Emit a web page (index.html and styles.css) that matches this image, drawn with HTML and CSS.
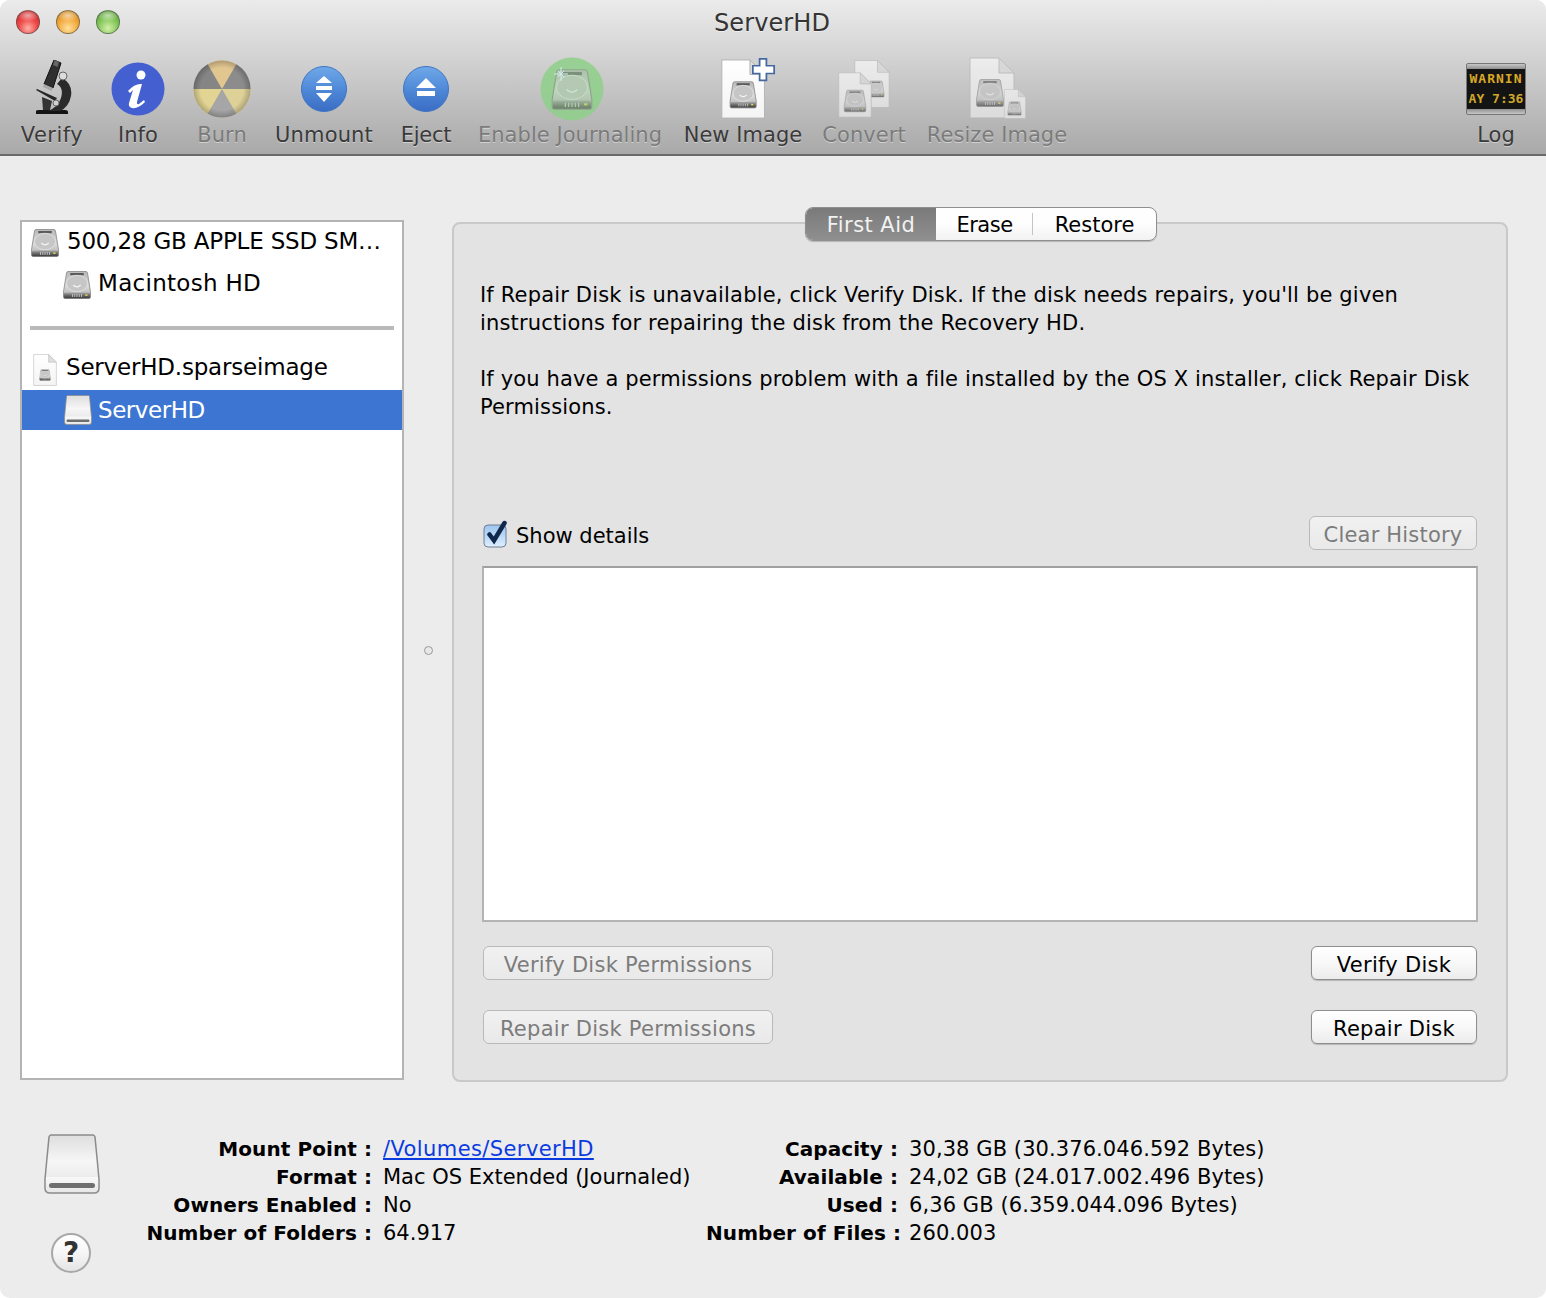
FILE: index.html
```html
<!DOCTYPE html>
<html lang="en">
<head>
<meta charset="utf-8">
<title>ServerHD</title>
<link rel="stylesheet" href="styles.css">
</head>
<body>
<svg class="sprite" width="0" height="0" aria-hidden="true">
  <defs>
    <linearGradient id="hdBody" x1="0" y1="0" x2="0" y2="1"><stop offset="0" stop-color="#b9b9b9"/><stop offset="0.55" stop-color="#d8d8d8"/><stop offset="1" stop-color="#ababab"/></linearGradient>
    <linearGradient id="hdFoot" x1="0" y1="0" x2="0" y2="1"><stop offset="0" stop-color="#a8a8a8"/><stop offset="0.5" stop-color="#6c6c6c"/><stop offset="1" stop-color="#3d3d3d"/></linearGradient>
    <linearGradient id="remBody" x1="0" y1="0" x2="0" y2="1"><stop offset="0" stop-color="#dedede"/><stop offset="0.45" stop-color="#f6f6f6"/><stop offset="0.72" stop-color="#ececec"/><stop offset="0.73" stop-color="#f8f8f8"/><stop offset="1" stop-color="#e6e6e6"/></linearGradient>
    <linearGradient id="blueBtn" x1="0" y1="0" x2="0" y2="1"><stop offset="0" stop-color="#6fa9e8"/><stop offset="0.55" stop-color="#4d86d6"/><stop offset="1" stop-color="#3a6dc4"/></linearGradient>
    <linearGradient id="docFill" x1="0" y1="0" x2="0" y2="1"><stop offset="0" stop-color="#ffffff"/><stop offset="1" stop-color="#f4f4f4"/></linearGradient>
    <linearGradient id="checkFill" x1="0" y1="0" x2="0" y2="1"><stop offset="0" stop-color="#9fc6ee"/><stop offset="0.5" stop-color="#b9d8f7"/><stop offset="1" stop-color="#e0f0ff"/></linearGradient>
    <radialGradient id="burnShade" cx="0.5" cy="0.5" r="0.5"><stop offset="0.75" stop-color="#000" stop-opacity="0"/><stop offset="1" stop-color="#000" stop-opacity="0.22"/></radialGradient>
    <symbol id="hd" viewBox="0 0 40 40">
      <path d="M8 2H32Q33.500 2 34 4L38 29V36Q38 38 36 38H4Q2 38 2 36V29L6 4Q6.500 2 8 2Z" fill="url(#hdBody)" stroke="#808080" stroke-width="1"/>
      <rect x="11" y="4" width="18" height="3" fill="#5a5a5a"/>
      <ellipse cx="20" cy="18" rx="14" ry="11" fill="#c6c6c6" stroke="#e6e6e6" stroke-width="1"/>
      <path d="M15 20Q20 25 25 20" fill="none" stroke="#f4f4f4" stroke-width="1.500"/>
      <rect x="2.500" y="30" width="35" height="7.500" rx="1.500" fill="url(#hdFoot)"/>
      <path d="M14 32V36M17 32V36M20 32V36M23 32V36M26 32V36" stroke="#d4d4d4" stroke-width="1"/>
      <rect x="31" y="32.500" width="3" height="2" fill="#e8d34a"/>
    </symbol>
    <symbol id="rem" viewBox="0 0 56 60">
      <path d="M7 1H49Q50.500 1 51 3L55 45V54Q55 59 50 59H6Q1 59 1 54V45L5 3Q5.500 1 7 1Z" fill="url(#remBody)" stroke="#8b8b8b" stroke-width="1.500"/>
      <rect x="5" y="49" width="46" height="5" rx="2.500" fill="#6e6e6e"/>
    </symbol>
    <symbol id="page" viewBox="0 0 46 62">
      <path d="M1 1H30L45 16V61H1Z" fill="url(#docFill)" stroke="#b4b4b4" stroke-width="1"/>
      <path d="M30 1V16H45Z" fill="#dedede" stroke="#b4b4b4" stroke-width="1"/>
    </symbol>
    <symbol id="micro" viewBox="0 0 36 56">
      <path d="M0 51Q0 50 3 50H29Q32 50 32 52V54H0Z" fill="#141414"/>
      <path d="M26 18Q37 24 35 36Q33 47 24 51H12Q22 47 25 38Q28 28 21 24Z" fill="#2a2a2a"/>
      <path d="M18 0L25 3L17 28L8 24Z" fill="#2f2f2f" stroke="#111111" stroke-width="1"/>
      <path d="M18.500 0L23 2L21.500 7L17 5Z" fill="#666666"/>
      <path d="M8 24L17 28L15.500 31L7 27Z" fill="#a8a8a8"/>
      <path d="M0 30L1 29L21 38L19 41Z" fill="#262626"/>
      <path d="M6 37L16 41L14 50H7Z" fill="#333333"/>
      <circle cx="27" cy="16" r="4" fill="#dcdcdc" stroke="#666666" stroke-width="1"/>
      <circle cx="20" cy="43" r="3" fill="#d0d0d0" stroke="#666666" stroke-width="1"/>
    </symbol>
  </defs>
</svg>

<div class="window">
  <header class="toolbar">
    <div class="traffic">
      <span class="light light-red"></span>
      <span class="light light-amber"></span>
      <span class="light light-green"></span>
    </div>
    <div class="title">ServerHD</div>
    <div class="tools">
      <div class="tool w-verify">
        <div class="tool-icon"><svg class="i-micro"><use href="#micro"/></svg></div>
        <span class="tool-label">Verify</span>
      </div>
      <div class="tool w-info">
        <div class="tool-icon">
          <svg class="i-circle54" viewBox="0 0 54 54">
            <circle cx="27" cy="27" r="26.500" fill="#4460d0"/>
            <circle cx="30" cy="13" r="4.500" fill="#fff"/>
            <path d="M17 29Q24 21 31 22L26 40Q25.500 43 28 42L33 38L34 40Q27 47 21 46Q17 45 18 41L22 28L19 31Z" fill="#fff"/>
          </svg>
        </div>
        <span class="tool-label">Info</span>
      </div>
      <div class="tool w-burn is-off">
        <div class="tool-icon">
          <svg class="i-burn" viewBox="0 0 58 58">
            <circle cx="29" cy="29" r="28.500" fill="#dcc88e"/>
            <path d="M29 29L14.700 4.300A28.500 28.500 0 0 1 43.300 4.300Z" fill="#e2c690"/>
            <path d="M29 29L14.700 4.300A28.500 28.500 0 0 0 0.500 29Z" fill="#858585"/>
            <path d="M29 29L43.300 4.300A28.500 28.500 0 0 1 57.500 29Z" fill="#8c8c8c"/>
            <path d="M29 29L0.500 29A28.500 28.500 0 0 0 14.700 53.700Z" fill="#e2d594"/>
            <path d="M29 29L57.500 29A28.500 28.500 0 0 1 43.300 53.700Z" fill="#ddd198"/>
            <path d="M29 29L14.700 53.700A28.500 28.500 0 0 0 43.300 53.700Z" fill="#a6a6a6"/>
            <circle cx="29" cy="29" r="28.500" fill="url(#burnShade)"/>
          </svg>
        </div>
        <span class="tool-label">Burn</span>
      </div>
      <div class="tool w-unmount">
        <div class="tool-icon">
          <svg class="i-round" viewBox="0 0 46 46">
            <circle cx="23" cy="23" r="22.500" fill="url(#blueBtn)" stroke="#3f74c4" stroke-width="1"/>
            <path d="M23 10L31 17H15Z M15 20H31V24H15Z M15 27H31L23 36Z" fill="#fff"/>
          </svg>
        </div>
        <span class="tool-label">Unmount</span>
      </div>
      <div class="tool w-eject">
        <div class="tool-icon">
          <svg class="i-round" viewBox="0 0 46 46">
            <circle cx="23" cy="23" r="22.500" fill="url(#blueBtn)" stroke="#3f74c4" stroke-width="1"/>
            <path d="M23 12L33 22H13Z M14 25H32V30H14Z" fill="#fff"/>
          </svg>
        </div>
        <span class="tool-label">Eject</span>
      </div>
      <div class="tool w-journal is-off">
        <div class="tool-icon">
          <svg class="i-journal" viewBox="0 0 64 64">
            <circle cx="32" cy="32" r="31.500" fill="#8fd08a"/>
            <g opacity="0.62"><use href="#hd" x="10" y="9" width="44" height="47"/></g>
            <path d="M18 14L24 20M24 14L18 20M21 10V24M14 17H28" stroke="#d5f3f5" stroke-width="1"/>
          </svg>
        </div>
        <span class="tool-label">Enable Journaling</span>
      </div>
      <div class="tool w-new">
        <div class="tool-icon">
          <svg class="i-new" viewBox="0 0 56 64">
            <use href="#page" x="0" y="1" width="46" height="62"/>
            <use href="#hd" x="8" y="20" width="30" height="36"/>
            <path d="M40 1H47V8H55V16H47V23H40V16H33V8H40Z" fill="#fff" stroke="#44689f" stroke-width="1.800"/>
          </svg>
        </div>
        <span class="tool-label">New Image</span>
      </div>
      <div class="tool w-convert is-off">
        <div class="tool-icon">
          <svg class="i-convert" viewBox="0 0 54 62">
            <use href="#page" x="17" y="1" width="36" height="50"/>
            <use href="#hd" x="30" y="17" width="18" height="28"/>
            <use href="#page" x="1" y="13" width="34" height="48"/>
            <use href="#hd" x="6" y="30" width="24" height="26"/>
          </svg>
        </div>
        <span class="tool-label">Convert</span>
      </div>
      <div class="tool w-resize is-off">
        <div class="tool-icon">
          <svg class="i-resize" viewBox="0 0 60 63">
            <use href="#page" x="1" y="0" width="46" height="62"/>
            <use href="#hd" x="7" y="20" width="30" height="32"/>
            <use href="#page" x="35" y="32" width="24" height="30"/>
            <use href="#hd" x="39" y="44" width="15" height="15"/>
          </svg>
        </div>
        <span class="tool-label">Resize Image</span>
      </div>
      <div class="tool-spacer"></div>
      <div class="tool w-log">
        <div class="tool-icon">
          <div class="log-sign">
            <div class="log-screen">
              <span class="log-line">WARNIN</span>
              <span class="log-line log-line-2">AY 7:36</span>
            </div>
          </div>
        </div>
        <span class="tool-label">Log</span>
      </div>
    </div>
  </header>

  <main class="main">
    <aside class="sidebar">
      <div class="row row-top row-disk"><svg class="i-hd"><use href="#hd"/></svg><span class="row-text">500,28 GB APPLE SSD SM…</span></div>
      <div class="row row-sub row-mac"><svg class="i-hd"><use href="#hd"/></svg><span class="row-text">Macintosh HD</span></div>
      <div class="row-sep"></div>
      <div class="row row-top row-image"><svg class="i-sparse" viewBox="0 0 24 32"><use href="#page" width="24" height="32"/><use href="#hd" x="6" y="14" width="12" height="14"/></svg><span class="row-text">ServerHD.sparseimage</span></div>
      <div class="row row-sub row-sel"><svg class="i-rem"><use href="#rem"/></svg><span class="row-text">ServerHD</span></div>
    </aside>

    <div class="splitter"><span class="split-dot"></span></div>

    <section class="panel">
      <div class="tabs">
        <span class="tab tab-on">First Aid</span>
        <span class="tab tab-erase">Erase</span>
        <span class="tab tab-restore">Restore</span>
      </div>
      <p class="copy">If Repair Disk is unavailable, click Verify Disk. If the disk needs repairs, you'll be given<br>instructions for repairing the disk from the Recovery HD.</p>
      <p class="copy copy-2">If you have a permissions problem with a file installed by the OS X installer, click Repair Disk<br>Permissions.</p>
      <div class="detail-row">
        <label class="check">
          <svg class="i-check" viewBox="0 0 26 28">
            <rect x="1" y="5" width="22" height="22" rx="4" fill="url(#checkFill)" stroke="#6d7f96" stroke-width="1"/>
            <path d="M6.500 14.500L11 20.500L21.500 3" fill="none" stroke="#10284c" stroke-width="4.500" stroke-linecap="round"/>
          </svg>
          <span>Show details</span>
        </label>
        <button class="btn btn-off btn-clear">Clear History</button>
      </div>
      <div class="log-box"></div>
      <div class="btn-row btn-row-1">
        <button class="btn btn-off btn-perm">Verify Disk Permissions</button>
        <button class="btn btn-disk">Verify Disk</button>
      </div>
      <div class="btn-row btn-row-2">
        <button class="btn btn-off btn-perm">Repair Disk Permissions</button>
        <button class="btn btn-disk">Repair Disk</button>
      </div>
    </section>
  </main>

  <footer class="footer">
    <div class="foot-icons">
      <svg class="i-rem-big"><use href="#rem"/></svg>
      <span class="help">?</span>
    </div>
    <dl class="facts facts-left">
      <dt>Mount Point :</dt><dd><a class="link" href="#">/Volumes/ServerHD</a></dd>
      <dt>Format :</dt><dd>Mac OS Extended (Journaled)</dd>
      <dt>Owners Enabled :</dt><dd>No</dd>
      <dt>Number of Folders :</dt><dd>64.917</dd>
    </dl>
    <dl class="facts facts-right">
      <dt>Capacity :</dt><dd>30,38 GB (30.376.046.592 Bytes)</dd>
      <dt>Available :</dt><dd>24,02 GB (24.017.002.496 Bytes)</dd>
      <dt>Used :</dt><dd>6,36 GB (6.359.044.096 Bytes)</dd>
      <dt>Number of Files :</dt><dd>260.003</dd>
    </dl>
  </footer>
</div>
</body>
</html>
```
FILE: styles.css
```css
* { box-sizing: border-box; }
html, body { margin: 0; padding: 0; background: #fff; }
body { width: 1546px; height: 1298px; overflow: hidden; font-family: "DejaVu Sans", sans-serif; color: #000; }
.sprite { display: block; width: 0; height: 0; overflow: hidden; }

.window { width: 1546px; height: 1298px; background: #ececec; border-radius: 10px; overflow: hidden; display: flex; flex-direction: column; }

/* toolbar */
.toolbar { height: 156px; flex: none; border-bottom: 2px solid #6a6a6a; background: linear-gradient(#ebebeb, #a9a9a9); display: flex; flex-direction: column; position: relative; }
.traffic { position: absolute; left: 16px; top: 10px; display: flex; gap: 16px; }
.light { width: 24px; height: 24px; border-radius: 50%; border: 1px solid rgba(70,70,70,.55); }
.light-red { background: radial-gradient(ellipse 50% 28% at 50% 20%, rgba(255,255,255,.55), rgba(255,255,255,0) 100%), radial-gradient(circle at 50% 78%, #ffb0a8 0%, #ee4a48 45%, #b81c20 100%); }
.light-amber { background: radial-gradient(ellipse 50% 28% at 50% 20%, rgba(255,255,255,.55), rgba(255,255,255,0) 100%), radial-gradient(circle at 50% 78%, #ffe09a 0%, #f2a83c 50%, #b67a18 100%); }
.light-green { background: radial-gradient(ellipse 50% 28% at 50% 20%, rgba(255,255,255,.55), rgba(255,255,255,0) 100%), radial-gradient(circle at 50% 78%, #d2f0a8 0%, #82c658 50%, #4a8c2c 100%); }
.title { height: 46px; flex: none; padding-right: 2px; text-align: center; font-size: 24px; line-height: 46px; color: #343434; letter-spacing: .1px; text-shadow: 0 1px 0 rgba(255,255,255,.5); margin-bottom: -2px; }
.tools { display: flex; padding-left: 10px; }
.tool { flex: none; display: flex; flex-direction: column; align-items: center; }
.tool-icon { height: 79px; margin-top: -1px; padding-top: 12px; display: flex; align-items: center; justify-content: center; }
.tool-label { font-size: 21px; line-height: 28px; color: #3a3a3a; white-space: nowrap; letter-spacing: .05px; text-shadow: 0 1px 0 rgba(255,255,255,.45); margin-top: -1px; }
.w-verify .tool-label { letter-spacing: .5px; }
.w-unmount .tool-label { letter-spacing: .15px; }
.w-eject .tool-label { letter-spacing: -.3px; }
.is-off .tool-label { color: #7b7b7b; }
.is-off .tool-icon svg { opacity: .6; }
.w-burn.is-off .tool-icon svg { opacity: 1; }
.w-journal.is-off .tool-icon svg { opacity: .85; }
.w-verify { width: 84px; }
.w-info { width: 88px; }
.w-burn { width: 80px; }
.w-unmount { width: 124px; }
.w-eject { width: 80px; }
.w-journal { width: 208px; }
.w-new { width: 138px; }
.w-convert { width: 104px; }
.w-resize { width: 162px; }
.tool-spacer { flex: 1; }
.w-log { width: 100px; }
.i-micro { width: 36px; height: 56px; margin-left: 4px; margin-top: -1px; }
.i-circle54 { width: 54px; height: 54px; }
.i-burn { width: 58px; height: 58px; }
.i-round { width: 46px; height: 46px; margin-top: 1px; }
.i-journal { width: 64px; height: 64px; margin-left: 3px; }
.i-new { width: 56px; height: 62px; margin-left: 10px; }
.i-convert { width: 54px; height: 62px; }
.i-resize { width: 60px; height: 63px; margin-left: 2px; }
.log-sign { width: 60px; height: 52px; padding: 5px 0; background: linear-gradient(#c8c8c8, #8e8e8e 10%, #8e8e8e 90%, #c8c8c8); border: 1px solid #777; border-radius: 2px; display: flex; }
.log-screen { flex: 1; background: #141414; display: flex; flex-direction: column; justify-content: center; align-items: center; }
.log-line { font-family: "DejaVu Sans Mono", monospace; font-size: 13px; font-weight: bold; line-height: 20px; color: #dba826; white-space: nowrap; letter-spacing: 1px; }
.log-line-2 { letter-spacing: 0; color: #cfa62a; }

/* main */
.main { flex: none; display: flex; padding: 64px 0 0 20px; }
.sidebar { width: 384px; height: 860px; flex: none; background: #fff; border: 2px solid #b4b4b4; }
.row { height: 42px; display: flex; align-items: center; font-size: 23px; letter-spacing: -.2px; white-space: nowrap; }
.row-top { padding-left: 8px; gap: 6px; }
.row-sub { padding-left: 40px; gap: 5px; }
.row-text { display: block; margin-top: -4px; }
.row-disk .row-text { margin-left: 1px; }
.row-mac .row-text { letter-spacing: .3px; margin-left: 1px; }
.i-hd { width: 30px; height: 30px; flex: none; }
.i-sparse { width: 24px; height: 32px; flex: none; margin: 0 3px 0 3px; }
.i-rem { width: 28px; height: 30px; flex: none; margin-left: 2px; }
.row-sep { height: 4px; margin: 20px 8px 20px 8px; background: #b9b9b9; }
.row-image { height: 41px; margin-top: -1px; }
.row-image .row-text { margin-top: -5px; }
.row-sel { height: 40px; background: #3d76d2; color: #fff; }
.row-sel .row-text { margin-top: 0; margin-left: 1px; letter-spacing: -.45px; }

.splitter { width: 48px; flex: none; height: 860px; display: flex; align-items: center; justify-content: center; padding-left: 1px; }
.split-dot { width: 9px; height: 9px; border-radius: 50%; border: 1px solid #9a9a9a; background: #e8e8e8; }

.panel { position: relative; width: 1056px; height: 860px; margin-top: 2px; background: #e3e3e3; border: 2px solid #c9c9c9; border-radius: 8px; padding: 57px 28px 0 26px; display: flex; flex-direction: column; }
.tabs { position: absolute; left: 351px; top: -17px; display: flex; width: 352px; height: 34px; border-radius: 8px; background: linear-gradient(#ffffff, #fdfdfd 50%, #f2f2f2); border: 1px solid #8f8f8f; overflow: hidden; box-shadow: 0 1px 1px rgba(0,0,0,.2); font-size: 21px; }
.tab { line-height: 34px; text-align: center; white-space: nowrap; }
.tab-on { width: 130px; background: linear-gradient(#7a7a7a, #8f8f8f); color: #f2f2f2; letter-spacing: .45px; }
.tab-erase { width: 97px; position: relative; letter-spacing: -.5px; }
.tab-erase::after { content: ""; position: absolute; right: 0; top: 5px; bottom: 5px; width: 1px; background: #c4c4c4; }
.tab-restore { flex: 1; }
.copy { margin: 0; font-size: 21px; line-height: 28px; white-space: nowrap; letter-spacing: .17px; }
.copy-2 { margin-top: 28px; letter-spacing: .14px; }
.detail-row { margin-top: 95px; height: 34px; display: flex; align-items: center; justify-content: space-between; padding-left: 3px; padding-right: 1px; }
.check { display: flex; align-items: center; gap: 7px; font-size: 21px; }
.check span { padding-top: 6px; }
.i-check { width: 26px; height: 28px; flex: none; margin-top: 1px; }
.btn { font-family: inherit; font-size: 21px; height: 34px; padding: 3px 0 0; border-radius: 6px; border: 1px solid #8e8e8e; background: linear-gradient(#ffffff, #f8f8f8 50%, #ececec); color: #000; white-space: nowrap; letter-spacing: .27px; box-shadow: 0 1px 1px rgba(0,0,0,.2); }
.btn-off { color: #7c7c7c; background: linear-gradient(#f1f1f1, #e9e9e9); border-color: #b9b9b9; box-shadow: none; }
.btn-clear { width: 168px; letter-spacing: .2px; }
.log-box { margin: 16px 0 0 2px; height: 356px; width: 996px; background: #fff; border: 2px solid #a0a0a0; border-bottom-color: #b4b4b4; border-left-color: #b4b4b4; border-right-color: #b4b4b4; flex: none; }
.btn-row { display: flex; justify-content: space-between; padding: 0 0 0 3px; width: 997px; }
.btn-row-1 { margin-top: 24px; }
.btn-row-2 { margin-top: 30px; }
.btn-perm { width: 290px; }
.btn-disk { width: 166px; }

/* footer */
.footer { flex: none; display: flex; align-items: flex-start; padding: 53px 0 0 44px; }
.foot-icons { width: 56px; flex: none; display: flex; flex-direction: column; align-items: center; }
.i-rem-big { width: 56px; height: 60px; flex: none; margin-top: -1px; }
.help { margin-top: 39px; margin-left: -2px; width: 40px; height: 40px; border-radius: 50%; border: 2px solid #a8a8a8; background: linear-gradient(#ffffff, #f6f6f6 50%, #e4e4e4); text-align: center; font-size: 28px; font-weight: bold; line-height: 36px; color: #333; }
.facts { margin: 0; display: grid; font-size: 21px; line-height: 28px; white-space: nowrap; column-gap: 11px; flex: none; }
.facts dt { font-weight: bold; font-size: 20px; text-align: right; letter-spacing: .08px; }
.facts dd { margin: 0; letter-spacing: .08px; }
.facts-left { grid-template-columns: 272px 329px; }
.facts-left dd { letter-spacing: 0; }
.facts-right { grid-template-columns: 192px auto; margin-left: -6px; }
.link { color: #0b3be0; text-decoration: underline; letter-spacing: .4px; }
```
